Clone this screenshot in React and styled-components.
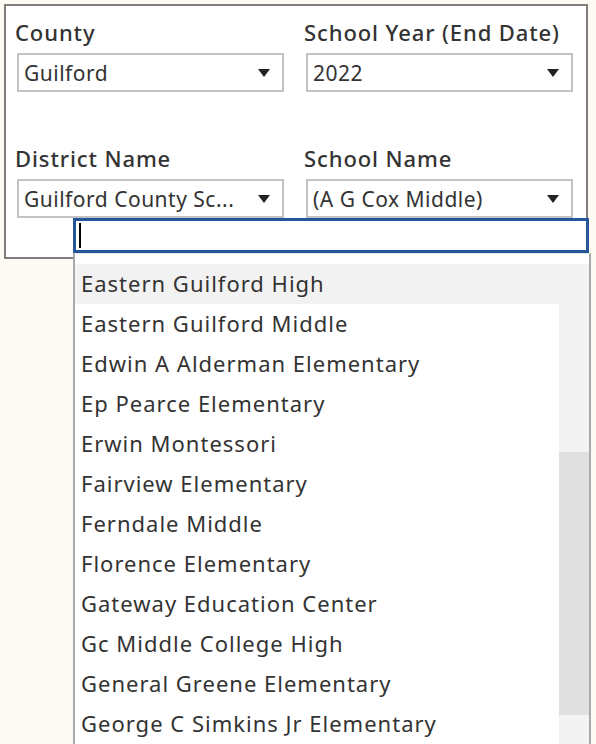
import React from "react";
import styled, { createGlobalStyle } from "styled-components";

const GlobalStyle = createGlobalStyle`
  html, body {
    margin: 0;
    padding: 0;
    background: #fcfaf3;
    font-family: "Noto Sans", "Open Sans", sans-serif;
    color: #333333;
  }
`;

const Page = styled.div`
  position: relative;
  width: 596px;
  height: 744px;
  overflow: hidden;
`;

const Panel = styled.div`
  box-sizing: border-box;
  margin: 4px 0 0 4px;
  width: 584px;
  height: 255px;
  border: 2px solid #7d7d7d;
  background: #ffffff;
  display: grid;
  grid-template-columns: 289px 1fr;
  grid-template-rows: 126px 1fr;
  padding: 11px 0 0 9px;
`;

const Filter = styled.div`
  display: flex;
  flex-direction: column;
`;

const Label = styled.div`
  font-size: 22px;
  font-weight: 500;
  letter-spacing: 0.9px;
  line-height: 30px;
  height: 36px;
  color: #333333;
`;

const Select = styled.div`
  box-sizing: border-box;
  margin-left: 2px;
  width: 267px;
  height: 39px;
  border: 2px solid #c2c2c2;
  display: flex;
  align-items: center;
  justify-content: space-between;
  padding: 0 12px 0 5px;
  font-size: 21px;
  letter-spacing: 0.5px;
  color: #333333;
`;

const Caret = styled.span`
  width: 0;
  height: 0;
  border-left: 6px solid transparent;
  border-right: 6px solid transparent;
  border-top: 8px solid #222222;
`;

const Dropdown = styled.div`
  position: absolute;
  left: 73px;
  top: 218px;
  width: 518px;
  bottom: 0;
  display: flex;
  flex-direction: column;
`;

const SearchWrap = styled.div`
  position: relative;
`;

const Search = styled.input`
  box-sizing: border-box;
  display: block;
  width: 516px;
  height: 35px;
  border: 3px solid #25569c;
  border-radius: 0;
  outline: none;
  margin: 0;
  padding: 0 4px;
  font-size: 20px;
  background: #ffffff;
`;

const Cursor = styled.span`
  position: absolute;
  left: 6px;
  top: 5px;
  width: 2px;
  height: 25px;
  background: #000000;
`;

const List = styled.div`
  flex: 1;
  box-sizing: border-box;
  background: #ffffff;
  border-left: 2px solid #a9a9a9;
  border-right: 2px solid #a9a9a9;
  border-top: 1px solid #e4e4e4;
  padding-top: 10px;
  display: flex;
`;

const Items = styled.div`
  flex: 1;
  display: flex;
  flex-direction: column;
`;

const Item = styled.div`
  height: 40px;
  line-height: 38px;
  padding-left: 6px;
  font-size: 22px;
  letter-spacing: 1px;
  color: #333333;
  white-space: nowrap;
  background: ${(p) => (p.$active ? "#f2f2f2" : "transparent")};
`;

const Track = styled.div`
  width: 30px;
  background: #f3f3f3;
`;

const Thumb = styled.div`
  margin-top: 188px;
  height: 263px;
  background: #e0e0e0;
`;

const schools = [
  "Eastern Guilford High",
  "Eastern Guilford Middle",
  "Edwin A Alderman Elementary",
  "Ep Pearce Elementary",
  "Erwin Montessori",
  "Fairview Elementary",
  "Ferndale Middle",
  "Florence Elementary",
  "Gateway Education Center",
  "Gc Middle College High",
  "General Greene Elementary",
  "George C Simkins Jr Elementary",
];

const FilterBox = ({ label, value }) => (
  <Filter>
    <Label>{label}</Label>
    <Select>
      <span>{value}</span>
      <Caret />
    </Select>
  </Filter>
);

export default function App() {
  return (
    <Page>
      <GlobalStyle />
      <Panel>
        <FilterBox label="County" value="Guilford" />
        <FilterBox label="School Year (End Date)" value="2022" />
        <FilterBox label="District Name" value="Guilford County Sc..." />
        <FilterBox label="School Name" value="(A G Cox Middle)" />
      </Panel>
      <Dropdown>
        <SearchWrap>
          <Search readOnly value="" />
          <Cursor />
        </SearchWrap>
        <List>
          <Items>
            {schools.map((s, i) => (
              <Item key={s} $active={i === 0}>
                {s}
              </Item>
            ))}
          </Items>
          <Track>
            <Thumb />
          </Track>
        </List>
      </Dropdown>
    </Page>
  );
}
